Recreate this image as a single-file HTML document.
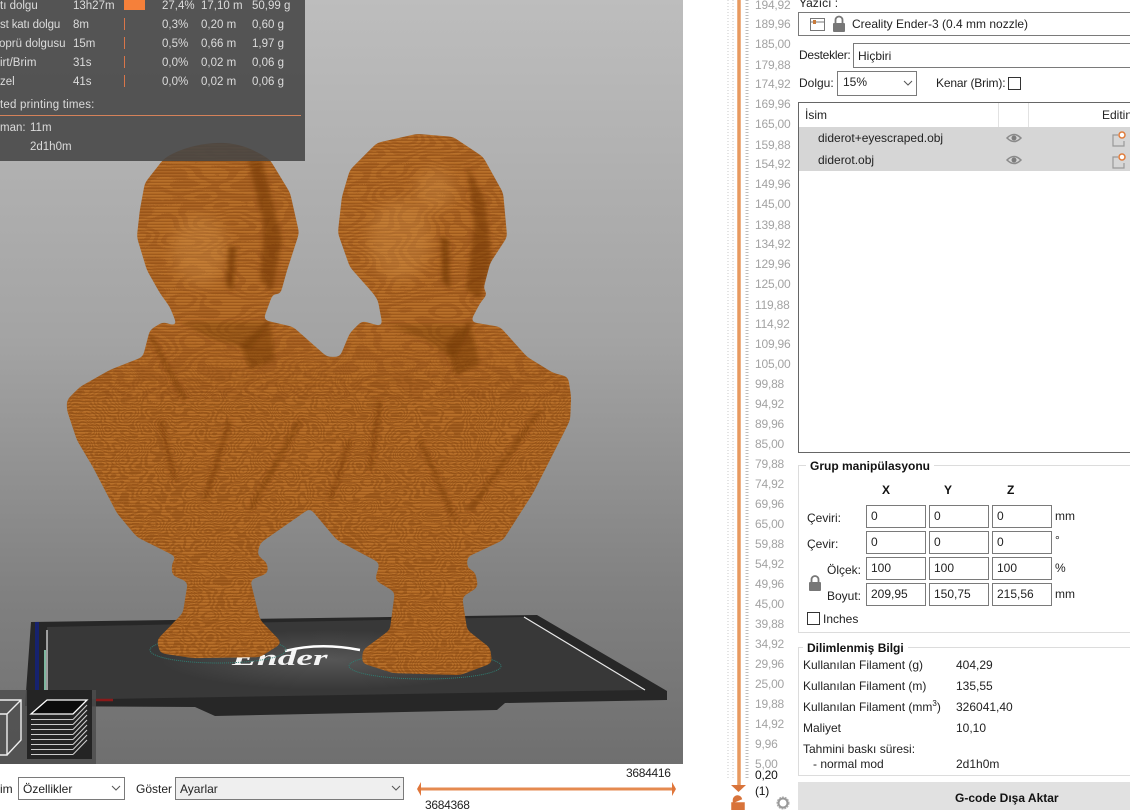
<!DOCTYPE html>
<html lang="tr"><head><meta charset="utf-8"><title>Cura</title>
<style>
html,body{margin:0;padding:0;background:#fff;width:1130px;height:810px;overflow:hidden}
body{position:relative;font:12px/14px "Liberation Sans",sans-serif;color:#222}
.t,.p,.r,.b{position:absolute;white-space:nowrap}
.p{color:#dcdcdc;font-size:11.5px}
.r{left:755px;color:#a3a3a3;font-size:12px;letter-spacing:-.2px}
.b{border:1px solid #7a7a7a;background:#fff;box-sizing:border-box}
.bd{font-weight:bold;color:#111}
.i{padding:3px 4px 1px;line-height:14px;width:60px;height:23px}
svg{position:absolute;left:0;top:0}
</style></head><body>
<div style="position:absolute;left:0;top:0;width:683px;height:764px;background:linear-gradient(#bdbdbd 0,#a3a3a3 45%,#808080 78%,#6f6f6f 100%)"></div>

<svg width="683" height="764" viewBox="0 0 683 764">
<defs>
<filter id="sm" x="-5%" y="-5%" width="110%" height="110%" color-interpolation-filters="sRGB">
<feGaussianBlur stdDeviation="3"/>
<feComponentTransfer><feFuncA type="linear" slope="14" intercept="-6.2"/></feComponentTransfer>
</filter>
<mask id="m" maskUnits="userSpaceOnUse" x="0" y="0" width="683" height="764"><path filter="url(#sm)" fill="#fff" d="M220 143C200 143 175 150 163 160L145 183L140 210L137 237L147 270L160 293L170 307L178 327L163 322L150 330L143 357L110 370L80 387L67 400L67 410L77 440L93 467L117 513L137 537L177 557L172 563L172 575L188 582L183 613L157 640L160 653L193 658L260 657L282 643L260 620L250 580L268 573L267 563L257 555L260 543L293 520L310 508L337 540L380 563L375 580L395 592L390 630L363 650L362 663L393 673L460 675L492 663L490 648L467 630L462 597L478 587L475 572L467 568L467 557L503 540L533 493L560 440L570 420L571 397L568 377L553 373L527 357L500 327L470 322L480 303L488 293L483 290L490 263L507 237L503 193L483 157L453 137L417 134L377 143L350 170L342 197L338 233L350 267L373 293L378 300L383 327L362 321L350 333L340 357L327 357L293 327L263 320L273 293L280 295L287 270L299 233L290 193L270 160C255 150 240 143 220 143Z"/></mask>
<linearGradient id="fade" x1="0" y1="0" x2="0" y2="1"><stop offset="0" stop-color="#000"/><stop offset=".22" stop-color="#fff"/><stop offset="1" stop-color="#fff"/></linearGradient>
<mask id="low" maskUnits="userSpaceOnUse" x="0" y="330" width="683" height="360"><rect y="330" width="683" height="360" fill="url(#fade)"/></mask>
<pattern id="ln" width="4" height="3" patternUnits="userSpaceOnUse"><rect width="4" height="1.2" y="1.8" fill="#8f5018" opacity=".6"/><rect width="4" height=".6" fill="#c9873f" opacity=".4"/></pattern>
<filter id="gr" x="0" y="0" width="100%" height="100%" color-interpolation-filters="sRGB">
<feTurbulence type="fractalNoise" baseFrequency=".014 .03" numOctaves="2" seed="7"/>
<feColorMatrix values="0 0 0 0 .5 0 0 0 0 .25 0 0 0 0 .07 1 0 0 0 0"/>
<feComponentTransfer><feFuncA type="discrete" tableValues="0 0 0 .3 0 .3 0 .3 0 .3 0 .3 0 .3 0 .3 0 .3 0 .3 0 0"/></feComponentTransfer>
</filter>
<filter id="gr2" x="0" y="0" width="100%" height="100%" color-interpolation-filters="sRGB">
<feTurbulence type="fractalNoise" baseFrequency=".035 .05" numOctaves="2" seed="11"/>
<feColorMatrix values="0 0 0 0 .48 0 0 0 0 .24 0 0 0 0 .05 1 0 0 0 0"/>
<feComponentTransfer><feFuncA type="discrete" tableValues="0 0 0 .42 0 .42 0 .42 0 .42 0 .42 0 .42 0 .42 0 .42 0 .42 0 .42 0 .42 0 0"/></feComponentTransfer>
</filter>
<filter id="bl" x="-40%" y="-40%" width="180%" height="180%"><feGaussianBlur stdDeviation="2.5"/></filter>
<filter id="bl2" x="-40%" y="-40%" width="180%" height="180%"><feGaussianBlur stdDeviation="7"/></filter>
<radialGradient id="gl" cx="50%" cy="50%" r="50%"><stop offset="0" stop-color="#565656"/><stop offset="1" stop-color="#383838"/></radialGradient>
</defs>

<polygon points="31,622 537,615 667,691 667,700 505,703 497,710 215,716 195,707 25,706" fill="#272727"/>
<polygon points="47,627 524,617 645,690 47,700" fill="#383838"/>
<ellipse cx="330" cy="660" rx="170" ry="30" fill="url(#gl)"/>
<path d="M47 630V697M524 617L645 690" stroke="#e8e8e8" stroke-width="1.2" fill="none"/>
<path d="M285 651Q320 642 360 650" stroke="#fff" stroke-width="2.500" fill="none"/>
<text transform="translate(232 665) scale(1.7 1)" font-family="Liberation Serif" font-style="italic" font-weight="bold" font-size="22" fill="#f4f4f4">Ender</text>
<ellipse cx="218" cy="650" rx="68" ry="13" fill="none" stroke="#2f7d72" stroke-dasharray="1 1"/>
<ellipse cx="425" cy="666" rx="76" ry="13" fill="none" stroke="#2f7d72" stroke-dasharray="1 1"/>
<path d="M37 622V700" stroke="#16226e" stroke-width="4"/><path d="M45 650V700" stroke="#7fb7a0" stroke-width="2"/>
<path d="M96 700H113" stroke="#8a1a1a" stroke-width="2.5"/>

<g mask="url(#m)">
<rect width="683" height="764" fill="#b46a25"/>
<rect width="683" height="400" filter="url(#gr)"/>
<g mask="url(#low)"><rect y="330" width="683" height="360" filter="url(#gr2)"/></g>
<rect width="683" height="764" fill="url(#ln)"/>
<g filter="url(#bl2)" fill="#e0a055" opacity=".28">
<ellipse cx="200" cy="250" rx="28" ry="35"/><ellipse cx="400" cy="240" rx="32" ry="40"/>
<ellipse cx="435" cy="190" rx="20" ry="22"/>
</g>
<g filter="url(#bl)" fill="#6b3409">
<path d="M248 160L262 160L282 240L272 292L260 280L264 225Z" opacity=".5"/>
<path d="M467 165L485 200L492 260L480 300L466 290L474 225Z" opacity=".5"/>
<path d="M229 245L236 248L233 292L226 285Z" opacity=".6"/>
<path d="M441 235L449 240L450 290L442 280Z" opacity=".6"/>
<path d="M180 322H270L250 350L210 338Z" opacity=".3"/>
<path d="M385 325H470L455 360L425 340Z" opacity=".3"/>
<path d="M240 345L270 320L275 360L250 370Z" opacity=".45"/>
<path d="M445 345L470 320L480 365L455 375Z" opacity=".45"/>
<g fill="none" stroke="#6b3409" stroke-width="4" opacity=".5">
<path d="M150 335L185 400M160 420L175 480M230 420L205 500M300 420L250 510M420 440L455 520M540 410L470 510M380 400L370 470M350 440L330 500"/>
</g>
</g>
</g>

<rect x="0" y="690" width="96" height="74" fill="#4d4d4d" opacity=".82"/>
<rect x="27" y="690" width="65" height="69" fill="#242424"/>
<path d="M-9 714H7V755H-9M-9 700H21V740L7 755M7 714L21 700" fill="none" stroke="#eee" stroke-width="1.4"/>
<path d="M31 714L47 700H87L73 714Z" fill="#0c0c0c" stroke="#fff" stroke-width="1.3"/>
<path d="M31 719.500H73M31 724.500H73M31 729.500H73M31 734.500H73M31 739.500H73M31 744.500H73M31 749.500H73M31 754.500H73M73 719.500L87 705M73 724.500L87 710M73 729.500L87 715M73 734.500L87 720M73 739.500L87 725M73 744.500L87 730M73 749.500L87 735M73 754.500L87 740" stroke="#ccc" stroke-width="1.1" fill="none"/>
</svg>

<div style="position:absolute;left:0;top:0;width:305px;height:161px;background:rgba(70,70,70,.88)"></div>
<div style="position:absolute;left:124px;top:0;width:21px;height:10px;background:#f5803a"></div>
<div style="position:absolute;left:0;top:115px;width:301px;height:1px;background:#d5825a"></div>
<div style="position:absolute;left:124px;top:18px;width:1px;height:12px;background:#d9764a"></div>
<div style="position:absolute;left:124px;top:37px;width:1px;height:12px;background:#d9764a"></div>
<div style="position:absolute;left:124px;top:56px;width:1px;height:12px;background:#d9764a"></div>
<div style="position:absolute;left:124px;top:75px;width:1px;height:12px;background:#d9764a"></div>
<span class="p" style="left:0;top:-1px">tı dolgu</span><span class="p" style="left:73px;top:-1px">13h27m</span><span class="p" style="left:162px;top:-1px">27,4%</span><span class="p" style="left:201px;top:-1px">17,10 m</span><span class="p" style="left:252px;top:-1px">50,99 g</span>
<span class="p" style="left:0;top:18px;letter-spacing:-.15px">st katı dolgu</span><span class="p" style="left:73px;top:18px">8m</span><span class="p" style="left:162px;top:18px">0,3%</span><span class="p" style="left:201px;top:18px">0,20 m</span><span class="p" style="left:252px;top:18px">0,60 g</span>
<span class="p" style="left:-1px;top:37px">oprü dolgusu</span><span class="p" style="left:73px;top:37px">15m</span><span class="p" style="left:162px;top:37px">0,5%</span><span class="p" style="left:201px;top:37px">0,66 m</span><span class="p" style="left:252px;top:37px">1,97 g</span>
<span class="p" style="left:0;top:56px">irt/Brim</span><span class="p" style="left:73px;top:56px">31s</span><span class="p" style="left:162px;top:56px">0,0%</span><span class="p" style="left:201px;top:56px">0,02 m</span><span class="p" style="left:252px;top:56px">0,06 g</span>
<span class="p" style="left:0;top:75px">zel</span><span class="p" style="left:73px;top:75px">41s</span><span class="p" style="left:162px;top:75px">0,0%</span><span class="p" style="left:201px;top:75px">0,02 m</span><span class="p" style="left:252px;top:75px">0,06 g</span>
<span class="p" style="left:0;top:98px;letter-spacing:.2px">ted printing times:</span>
<span class="p" style="left:0;top:121px">man:</span><span class="p" style="left:30px;top:121px">11m</span>
<span class="p" style="left:30px;top:140px">2d1h0m</span>

<!-- bottom bar -->
<span class="t" style="left:0;top:782px">im</span>
<div class="b" style="left:18px;top:777px;width:107px;height:23px;padding:4px 4px">Özellikler</div>
<span class="t" style="left:136px;top:782px">Göster</span>
<div class="b" style="left:175px;top:777px;width:229px;height:23px;padding:4px 4px;background:#efefef">Ayarlar</div>
<span class="t" style="left:626px;top:766px;letter-spacing:-.3px">3684416</span>
<span class="t" style="left:425px;top:798px;letter-spacing:-.3px">3684368</span>

<span class="r" style="top:-2px">194,92</span><span class="r" style="top:17px">189,96</span><span class="r" style="top:37px">185,00</span><span class="r" style="top:58px">179,88</span><span class="r" style="top:77px">174,92</span><span class="r" style="top:97px">169,96</span><span class="r" style="top:117px">165,00</span><span class="r" style="top:138px">159,88</span><span class="r" style="top:157px">154,92</span><span class="r" style="top:177px">149,96</span><span class="r" style="top:197px">145,00</span><span class="r" style="top:218px">139,88</span><span class="r" style="top:237px">134,92</span><span class="r" style="top:257px">129,96</span><span class="r" style="top:277px">125,00</span><span class="r" style="top:298px">119,88</span><span class="r" style="top:317px">114,92</span><span class="r" style="top:337px">109,96</span><span class="r" style="top:357px">105,00</span><span class="r" style="top:377px">99,88</span><span class="r" style="top:397px">94,92</span><span class="r" style="top:417px">89,96</span><span class="r" style="top:437px">85,00</span><span class="r" style="top:457px">79,88</span><span class="r" style="top:477px">74,92</span><span class="r" style="top:497px">69,96</span><span class="r" style="top:517px">65,00</span><span class="r" style="top:537px">59,88</span><span class="r" style="top:557px">54,92</span><span class="r" style="top:577px">49,96</span><span class="r" style="top:597px">45,00</span><span class="r" style="top:617px">39,88</span><span class="r" style="top:637px">34,92</span><span class="r" style="top:657px">29,96</span><span class="r" style="top:677px">25,00</span><span class="r" style="top:697px">19,88</span><span class="r" style="top:717px">14,92</span><span class="r" style="top:737px">9,96</span><span class="r" style="top:757px">5,00</span>
<span class="r" style="top:768px;color:#111">0,20</span><span class="r" style="top:784px;color:#111">(1)</span>

<!-- sidebar -->
<span class="t" style="left:799px;top:-4px">Yazıcı :</span>
<div class="b" style="left:798px;top:12px;width:340px;height:24px"></div>
<span class="t" style="left:852px;top:17px">Creality Ender-3 (0.4 mm nozzle)</span>
<span class="t" style="left:799px;top:48px;letter-spacing:-.25px">Destekler:</span>
<div class="b" style="left:853px;top:43px;width:290px;height:25px;padding:5px 4px">Hiçbiri</div>
<span class="t" style="left:799px;top:76px">Dolgu:</span>
<div class="b" style="left:837px;top:71px;width:80px;height:25px;padding:3px 5px">15%</div>
<span class="t" style="left:936px;top:76px;letter-spacing:-.15px">Kenar (Brim):</span>
<div class="b" style="left:1008px;top:77px;width:13px;height:13px;border-color:#333"></div>

<div class="b" style="left:798px;top:102px;width:350px;height:351px;border-color:#666"></div>
<div style="position:absolute;left:799px;top:127px;width:331px;height:44px;background:#d6d6d6"></div>
<div style="position:absolute;left:998px;top:103px;width:1px;height:24px;background:#e2e2e2"></div>
<div style="position:absolute;left:1028px;top:103px;width:1px;height:24px;background:#e2e2e2"></div>
<span class="t" style="left:805px;top:108px">İsim</span><span class="t" style="left:1102px;top:108px">Editin</span>
<span class="t" style="left:818px;top:131px">diderot+eyescraped.obj</span>
<span class="t" style="left:818px;top:153px">diderot.obj</span>

<div style="position:absolute;left:798px;top:465px;width:340px;height:168px;border:1px solid #dcdcdc;box-sizing:border-box"></div>
<span class="t bd" style="left:806px;top:459px;background:#fff;padding:0 4px">Grup manipülasyonu</span>
<span class="t bd" style="left:882px;top:483px">X</span><span class="t bd" style="left:944px;top:483px">Y</span><span class="t bd" style="left:1007px;top:483px">Z</span>
<span class="t" style="left:807px;top:511px">Çeviri:</span><span class="t" style="left:807px;top:537px">Çevir:</span><span class="t" style="left:827px;top:563px">Ölçek:</span><span class="t" style="left:827px;top:589px">Boyut:</span>
<div class="b i" style="left:866px;top:505px">0</div><div class="b i" style="left:929px;top:505px">0</div><div class="b i" style="left:992px;top:505px">0</div>
<div class="b i" style="left:866px;top:531px">0</div><div class="b i" style="left:929px;top:531px">0</div><div class="b i" style="left:992px;top:531px">0</div>
<div class="b i" style="left:866px;top:557px">100</div><div class="b i" style="left:929px;top:557px">100</div><div class="b i" style="left:992px;top:557px">100</div>
<div class="b i" style="left:866px;top:583px">209,95</div><div class="b i" style="left:929px;top:583px">150,75</div><div class="b i" style="left:992px;top:583px">215,56</div>
<span class="t" style="left:1055px;top:509px">mm</span><span class="t" style="left:1055px;top:533px">°</span><span class="t" style="left:1055px;top:561px">%</span><span class="t" style="left:1055px;top:587px">mm</span>
<div class="b" style="left:807px;top:612px;width:13px;height:13px;border-color:#333"></div>
<span class="t" style="left:823px;top:612px">Inches</span>

<div style="position:absolute;left:798px;top:647px;width:340px;height:129px;border:1px solid #dcdcdc;box-sizing:border-box"></div>
<span class="t bd" style="left:803px;top:641px;background:#fff;padding:0 4px">Dilimlenmiş Bilgi</span>
<span class="t" style="left:803px;top:658px">Kullanılan Filament (g)</span><span class="t" style="left:956px;top:658px">404,29</span>
<span class="t" style="left:803px;top:679px">Kullanılan Filament (m)</span><span class="t" style="left:956px;top:679px">135,55</span>
<span class="t" style="left:803px;top:700px">Kullanılan Filament (mm<sup style="font-size:8px;line-height:0">3</sup>)</span><span class="t" style="left:956px;top:700px">326041,40</span>
<span class="t" style="left:803px;top:721px">Maliyet</span><span class="t" style="left:956px;top:721px">10,10</span>
<span class="t" style="left:803px;top:742px">Tahmini baskı süresi:</span>
<span class="t" style="left:813px;top:757px">- normal mod</span><span class="t" style="left:956px;top:757px">2d1h0m</span>
<div style="position:absolute;left:798px;top:782px;width:332px;height:28px;background:#e1e1e1"></div>
<span class="t bd" style="left:955px;top:791px">G-code Dışa Aktar</span>

<svg width="1130" height="810" style="pointer-events:none">
<path d="M112 786l4 4 4-4M392 786l4 4 4-4M904 81l4 4 4-4" fill="none" stroke="#555" stroke-width="1"/>
<path d="M420 789H672" stroke="#e58a50" stroke-width="3"/>
<path d="M417 789l4-7v14zM676 789l-4-7v14z" fill="#e0763a"/>
<path d="M739 0V785" stroke="#e8995f" stroke-width="3.500"/>
<path d="M731 785H746L738.500 792Z" fill="#d8733a"/>
<path d="M733.500 803V800.500a4 4 0 0 1 8 -1M732 803H744V810H732Z" fill="#d8733a" stroke="#d8733a" stroke-width="1.500"/>
<path d="M728 0V780M733 0V780" stroke="#c9c9c9" stroke-width="1" stroke-dasharray="1 2" fill="none"/>
<path d="M747 0V780" stroke="#bdbdbd" stroke-width="3" stroke-dasharray="1 2" fill="none"/>
<circle cx="783" cy="803" r="4.500" fill="none" stroke="#999" stroke-width="2"/>
<circle cx="783" cy="803" r="6" fill="none" stroke="#aaa" stroke-width="1" stroke-dasharray="2 1"/>
<rect x="810.500" y="18.500" width="14" height="12" fill="#fff" stroke="#777"/><path d="M811 22H824" stroke="#777"/><rect x="813" y="20" width="3" height="4" fill="#c87a3a"/>
<rect x="833" y="23" width="12" height="9" rx="1" fill="#777"/><path d="M835.500 23V20a3.500 3.500 0 0 1 7 0V23" fill="none" stroke="#777" stroke-width="1.800"/>
<rect x="809" y="582" width="12" height="9" rx="1" fill="#777"/><path d="M811.500 582V579.500a3.500 3.500 0 0 1 7 0V582" fill="none" stroke="#777" stroke-width="1.800"/>
<g fill="none" stroke="#8a8a8a" stroke-width="1.500">
<path d="M1007 138Q1014 131 1021 138Q1014 145 1007 138Z"/><path d="M1007 160Q1014 153 1021 160Q1014 167 1007 160Z"/>
</g>
<g fill="none" stroke="#999" stroke-width="1.200">
<path d="M1118 135H1113V146H1124V141"/><path d="M1118 157H1113V168H1124V163"/>
</g>
<circle cx="1014" cy="138" r="2.500" fill="#7d7d7d"/><circle cx="1014" cy="160" r="2.500" fill="#7d7d7d"/>
<circle cx="1122" cy="135" r="3" fill="#fff" stroke="#e07b3a" stroke-width="1.500"/><circle cx="1122" cy="157" r="3" fill="#fff" stroke="#e07b3a" stroke-width="1.500"/>
</svg>
</body></html>
